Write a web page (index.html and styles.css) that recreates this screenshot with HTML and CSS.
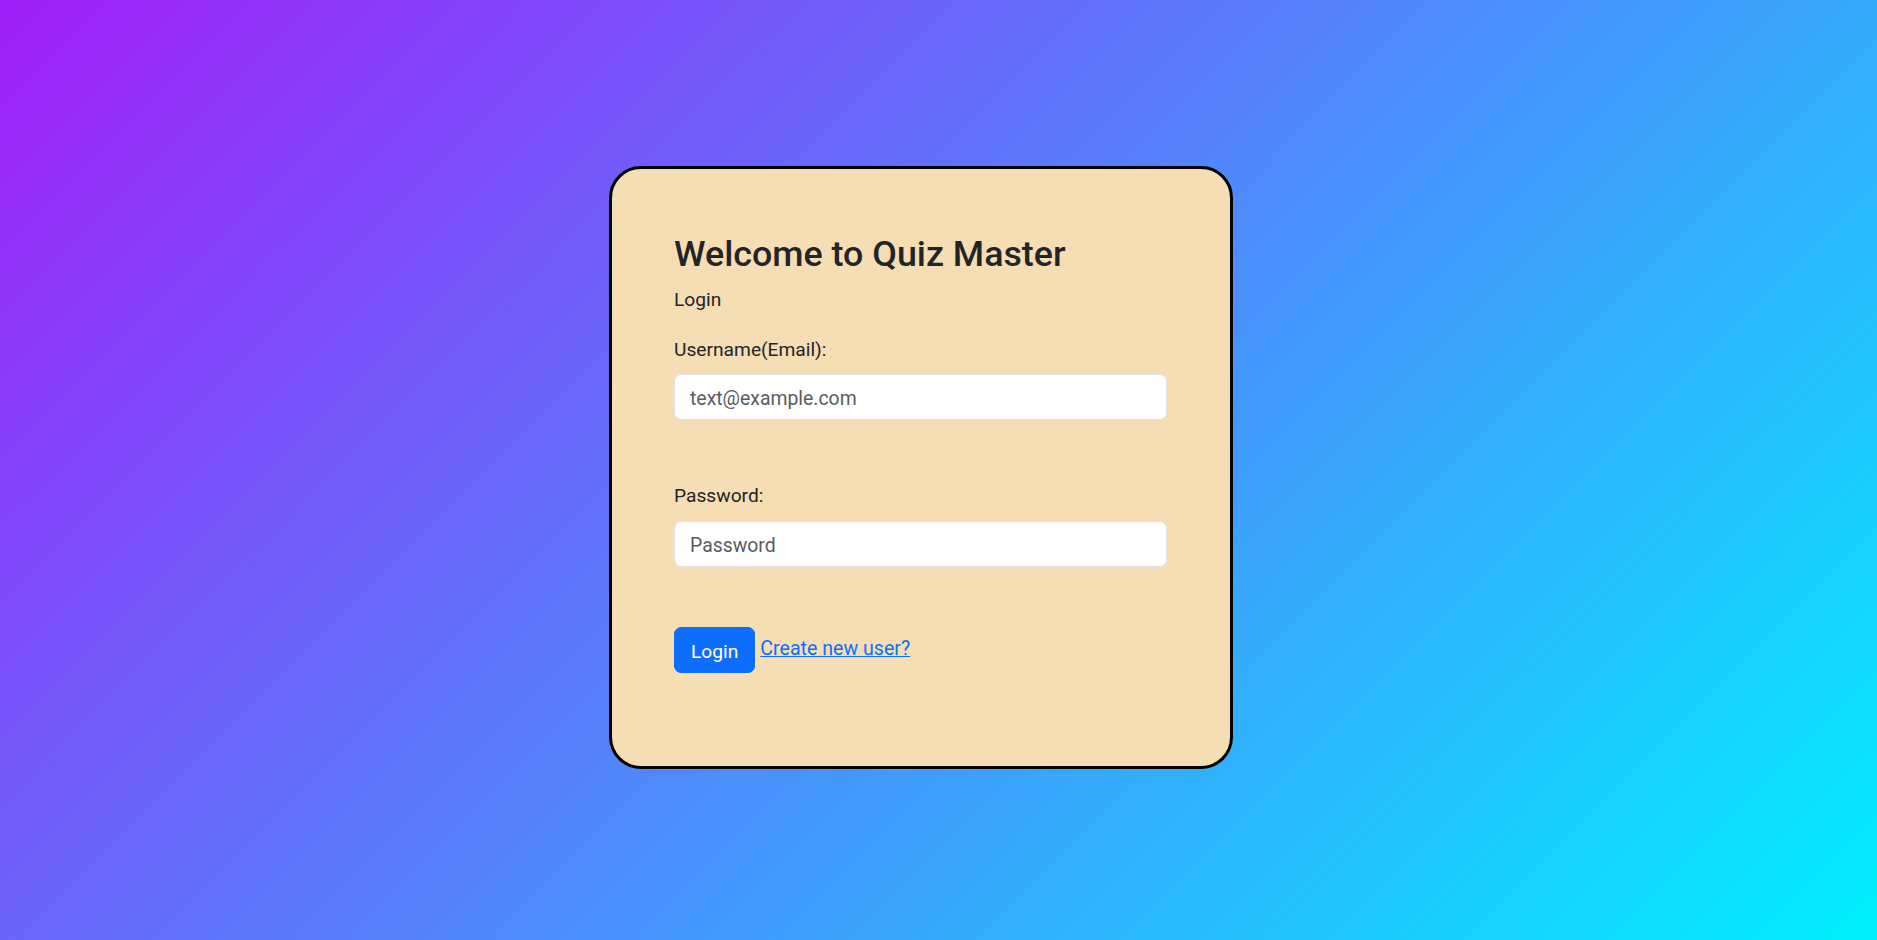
FILE: index.html
```html
<!DOCTYPE html>
<html lang="en">
<head>
<meta charset="utf-8">
<title>Quiz Master - Login</title>
<link rel="stylesheet" href="styles.css">
</head>
<body>
  <main class="card">
    <h3 class="title">Welcome to Quiz Master</h3>
    <p class="subtitle">Login</p>
    <form class="form">
      <div class="field">
        <label class="label" for="email">Username(Email):</label>
        <input class="input" id="email" type="email" placeholder="text@example.com">
      </div>
      <div class="field field-password">
        <label class="label" for="password">Password:</label>
        <input class="input" id="password" type="password" placeholder="Password">
      </div>
      <div class="actions">
        <button class="btn" type="button">Login</button>
        <a class="link" href="#">Create new user?</a>
      </div>
    </form>
  </main>
</body>
</html>
```
FILE: styles.css
```css
* {
  box-sizing: border-box;
}

html, body {
  margin: 0;
  height: 100%;
}

body {
  font-family: Roboto, "Liberation Sans", sans-serif;
  font-size: 19.2px;
  line-height: 1.5;
  color: #212529;
  background: linear-gradient(135deg, #a11ef8 0%, #00f0ff 100%);
  display: flex;
  align-items: center;
  justify-content: center;
}

.card {
  width: 624px;
  margin: 0 35px 5px 0;
  background: #f5deb3;
  border: 3px solid #000;
  border-radius: 32px;
  padding: 64px 63px 93px 62px;
}

.title {
  margin: 0 0 11px;
  font-size: 35.8px;
  line-height: 42px;
  font-weight: 500;
}

.subtitle {
  margin: 0 0 21px;
  line-height: 28.8px;
}

.form {
  margin: 0;
}

.field {
  display: flex;
  flex-direction: column;
}

.field-password {
  margin-top: 62px;
}

.label {
  line-height: 28.8px;
  margin-bottom: 9px;
}

.field-password .label {
  margin-bottom: 10px;
}

.input {
  width: 100%;
  height: 46px;
  padding: 9px 15px 6px;
  font-family: inherit;
  font-size: 19.4px;
  line-height: 28.8px;
  color: #212529;
  background: #fff;
  border: 1px solid #dee2e6;
  border-radius: 7px;
  outline: none;
}

.input::placeholder {
  color: #595c5f;
  opacity: 1;
}

.actions {
  display: flex;
  align-items: flex-start;
  margin-top: 60px;
}

.btn {
  font-family: inherit;
  font-size: 19.2px;
  line-height: 28.8px;
  padding: 10px 16px 5px;
  color: #fff;
  background: #0d6efd;
  border: 1px solid #0d6efd;
  border-radius: 7px;
  cursor: pointer;
}

.link {
  margin: 8px 0 0 5px;
  font-size: 19.6px;
  line-height: 28.8px;
  color: #0d6efd;
  text-decoration: underline;
}
```
